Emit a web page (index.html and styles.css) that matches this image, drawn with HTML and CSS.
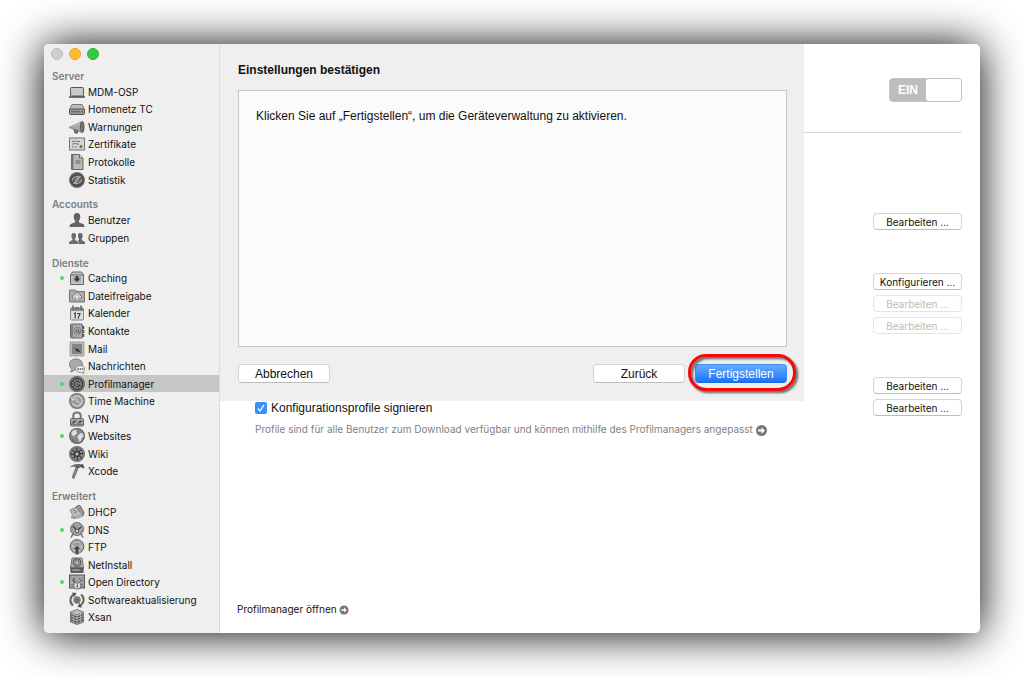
FILE: index.html
```html
<!DOCTYPE html>
<html lang="de">
<head>
    <meta charset="UTF-8"/>
    <meta name="viewport" content="width=device-width,initial-scale=1.0"/>
    <title>Server – Profilmanager</title>
    <link rel="stylesheet" href="styles.css">
</head>
<body>
<div class="window">
    <nav class="sidebar">
        <div class="titlebar">
            <button class="light" aria-label="Schließen"></button>
            <button class="light yellow" aria-label="Minimieren"></button>
            <button class="light green" aria-label="Vergrößern"></button>
        </div>

        <h2>Server</h2>
        <a href="#"><svg viewBox="0 0 16 16"><rect x="1.5" y="3.5" width="13" height="8.5" rx="1" fill="#c9c9c9" stroke="#555"/><path d="M0 13h16" stroke="#444" stroke-width="1.5"/></svg>MDM-OSP</a>
        <a href="#"><svg viewBox="0 0 16 16"><path d="M3 3.5h10l2.5 5H.5z" fill="#bbb" stroke="#777"/><rect x=".5" y="8" width="15" height="5.5" rx="1" fill="#999" stroke="#555"/><path d="M2 10.8h9M12 10.8h2" stroke="#555"/></svg>Homenetz TC</a>
        <a href="#"><svg viewBox="0 0 16 16"><path d="M0 8.5l13-6v11z" fill="#a5a5a5" stroke="#777" stroke-width=".7"/><path d="M5 10l1 4h2.5l-.5-3" fill="#777" stroke="#555"/><ellipse cx="13.3" cy="8" rx="1.7" ry="5.5" fill="#777" stroke="#555"/><path d="M4 7.5L11 4.500" stroke="#ccc"/></svg>Warnungen</a>
        <a href="#"><svg viewBox="0 0 16 16"><rect x=".5" y="2" width="15" height="12" fill="#d5d5d5" stroke="#777"/><path d="M3 5.500h3l1-1 1 1h3M3 8h2l1-1 1 1h3M3 11h2M6 11h2" stroke="#777" fill="none"/><circle cx="12" cy="10.5" r="1.5" fill="#666"/></svg>Zertifikate</a>
        <a href="#"><svg viewBox="0 0 16 16"><path d="M2.5.5h8L14 4v11.500H2.500z" fill="#b9b9b9" stroke="#666"/><path d="M2.500 1h2v14h-2z" fill="#777"/><path d="M10.500.5V4H14M6.500 7h5M6.500 9h5" fill="#ddd" stroke="#666"/></svg>Protokolle</a>
        <a href="#"><svg viewBox="0 0 16 16"><circle cx="8" cy="8" r="7.4" fill="#555" stroke="#777" stroke-width="1.2"/><path d="M3 9c1-5 6-5 9-4-4 0-5 2-6 5M13 7c-1 5-6 5-9 4 4 0 5-2 6-5" fill="none" stroke="#aaa" stroke-width="1.2"/><circle cx="8" cy="8" r="6" fill="none" stroke="#333" stroke-width=".6"/></svg>Statistik</a>

        <h2>Accounts</h2>
        <a href="#"><svg viewBox="0 0 16 16"><path d="M8 1c2.500 0 3.500 1.700 3.300 4-.1 2-.9 3.200-1.500 4 .1 1.500.6 1.800 3.200 2.600 1.800.6 2.300 1.200 2.500 3.400H.5c.2-2.200.7-2.800 2.500-3.400C5.600 10.800 6.100 10.500 6.200 9 5.600 8.200 4.800 7 4.700 5 4.500 2.700 5.500 1 8 1z" fill="#636363"/></svg>Benutzer</a>
        <a href="#"><svg viewBox="0 0 16 16"><path d="M4.700 3C6.500 3 7.200 4.300 7 6c-.1 1.500-.6 2.400-1 3 0 1.200.3 1.400 2 2 1.200.5 1.500 1 1.500 3H0c0-2 .3-2.500 1.500-3 1.700-.6 2-.8 2-2-.5-.6-1-1.500-1.100-3C2.200 4.300 3 3 4.700 3z" fill="#6d6d6d"/><path d="M11.300 3c1.800 0 2.500 1.300 2.300 3-.1 1.500-.6 2.400-1 3 0 1.200.3 1.400 1.900 2 1.200.5 1.500 1 1.500 3h-6c0-2-.3-2.700-1.300-3.300 1.300-.5 1.400-.8 1.300-1.700-.5-.6-.9-1.500-1-3-.2-1.700.6-3 2.300-3z" fill="#666"/></svg>Gruppen</a>

        <h2>Dienste</h2>
        <a href="#" class="running"><svg viewBox="0 0 16 16"><path d="M3.500 2h9l2 2.500v10h-13v-10z" fill="#c4c4c4" stroke="#666"/><path d="M2 5h12" stroke="#666"/><path d="M4 5.500h8V12H4z" fill="#aaa"/><path d="M6.800 6h2.400v2.500h2L8 12 4.800 8.500h2z" fill="#333"/></svg>Caching</a>
        <a href="#"><svg viewBox="0 0 16 16"><path d="M.5 2h6l1 1.500h8V14H.5z" fill="#aaa" stroke="#777"/><path d="M8 4l5 4.800-5 4.700-5-4.700z" fill="#ddd" stroke="#777"/><path d="M8 6.500l2.300 2.300L8 11.200 5.700 8.800z" fill="#eee" stroke="#999"/></svg>Dateifreigabe</a>
        <a href="#"><svg viewBox="0 0 16 16"><rect x="1.5" y="3" width="13" height="12" rx="1" fill="#ddd" stroke="#888"/><path d="M2 3h12v3H2z" fill="#888"/><path d="M4 .5v4M12 .5v4M6 3h4" stroke="#666" stroke-width="1.5"/><path d="M5 9l1.200-1v5.500M8 8.500h3l-2 5" stroke="#444" fill="none" stroke-width="1.2"/></svg>Kalender</a>
        <a href="#"><svg viewBox="0 0 16 16"><rect x="1.5" y="1" width="12" height="14" rx="1" fill="#aaa" stroke="#666"/><path d="M3 1.500v13" stroke="#777" stroke-width="1.5"/><circle cx="8.300" cy="8" r="3.5" fill="#bbb" stroke="#777"/><path d="M9.700 6.500v3h1.500" stroke="#666" fill="none"/><circle cx="8.200" cy="8" r="1.4" fill="none" stroke="#555"/><path d="M14.500 3v3M14.500 7v3M14.500 11v3" stroke="#555" stroke-width="1.5"/></svg>Kontakte</a>
        <a href="#"><svg viewBox="0 0 16 16"><rect x="1" y="1" width="14" height="14" fill="#bbb" stroke="#888" stroke-dasharray="1.5 .7"/><rect x="3" y="3" width="10" height="10" fill="#858585"/><path d="M5 4l1.500 3.500L9 8l3 3.500-5-1.500z" fill="#333"/></svg>Mail</a>
        <a href="#"><svg viewBox="0 0 16 16"><path d="M7 1c4 0 6.500 2.400 6.500 5.500S11 12 7 12l-1.500-.2c-1 1.500-2.300 2-4 2 .8-.8 1.300-1.700 1.200-3C1.200 9.700.5 8.200.5 6.500.5 3.400 3 1 7 1z" fill="#aaa" stroke="#777"/><path d="M11.200 7.500c2.800 0 4.500 1.500 4.500 3.500 0 1-.5 2-1.300 2.600l.7 1.900-2.400-1h-1.500c-2.800 0-4.500-1.500-4.500-3.500s1.700-3.500 4.500-3.500z" fill="#eee" stroke="#777" stroke-width=".8"/><path d="M8.500 11H10M10.800 11h1.400M13 11h1.300" stroke="#555" stroke-width="1.3"/></svg>Nachrichten</a>
        <a href="#" class="running selected"><svg viewBox="0 0 16 16"><circle cx="8" cy="8" r="7.4" fill="#777" stroke="#666" stroke-width="1.2"/><circle cx="8" cy="8" r="5.6" fill="#444" stroke="#333"/><circle cx="8" cy="8" r="4.3" fill="none" stroke="#999" stroke-width="1.2" stroke-dasharray="2 .7"/><path d="M8 8l3.500-1M8 8L6 4.500M8 8l-2 3.500" stroke="#888"/><circle cx="8" cy="8" r="1.5" fill="#333" stroke="#999"/></svg>Profilmanager</a>
        <a href="#"><svg viewBox="0 0 16 16"><circle cx="8" cy="8" r="7.4" fill="#999" stroke="#777" stroke-width="1.2"/><path d="M4 5a5 5 0 1 1-.5 5M2.500 4l1 3 3-1" fill="none" stroke="#d0d0d0" stroke-width="1.4"/><path d="M8 5v3.500l2.500 1" fill="none" stroke="#ddd"/></svg>Time Machine</a>
        <a href="#"><svg viewBox="0 0 16 16"><path d="M4.300 8V4.500C4.300.5 11.700.5 11.700 4.500V8" fill="none" stroke="#777" stroke-width="2"/><rect x="1.5" y="7.5" width="13" height="7.5" rx="1" fill="#aaa" stroke="#666"/><path d="M2 12.500l3-3h3l-3 3zM8 12.500l3-3h3l-3 3z" fill="#555"/><path d="M2 13.500h12" stroke="#777"/></svg>VPN</a>
        <a href="#" class="running"><svg viewBox="0 0 16 16"><circle cx="8" cy="8" r="7.4" fill="#858585" stroke="#666" stroke-width="1.2"/><path d="M3 3.500c2-2 4-2 5-1.500L7 4l1.500 1-2 2L5 7l1 2-2-1-2-2.500zM9.500 7l2-2 2.500.5.5 3-2 2-.5 2.500-2 .5-.5-3-1.500-1z" fill="#ddd"/><path d="M3 10l3 4-3-1z" fill="#666"/></svg>Websites</a>
        <a href="#"><svg viewBox="0 0 16 16"><circle cx="8" cy="8" r="7.4" fill="#777" stroke="#777" stroke-width="1.2"/><path d="M8 2v12M2 8h12M3.800 3.800l8.400 8.400M12.200 3.800l-8.400 8.400" stroke="#3a3a3a" stroke-width="1.8"/><circle cx="8" cy="8" r="4.5" fill="none" stroke="#aaa" stroke-width="1.3" stroke-dasharray="1.500 2"/><circle cx="8" cy="8" r="1.5" fill="#ccc"/></svg>Wiki</a>
        <a href="#"><svg viewBox="0 0 16 16"><path d="M9.500 4.500L5 15.500l-2-1L7 4z" fill="#888" stroke="#555" stroke-width=".6"/><path d="M1 4.500C4 1 8 .5 12 1.500l2-.5 1.500 4-1.500.5-2-1.500-3 1-2-1C5 3 3 3.500 1 4.500z" fill="#555"/><path d="M4 3c2-1 4-1.200 7-.5" stroke="#aaa" stroke-width=".6" fill="none"/></svg>Xcode</a>

        <h2>Erweitert</h2>
        <a href="#"><svg viewBox="0 0 16 16"><path d="M1 6l9-4 5 8-10 4z" fill="#bbb" stroke="#777" stroke-width=".8"/><path d="M7 4l1-2 3-.5 4 7-1.500 3" fill="#999" stroke="#666"/><path d="M4 7l2-1M5 9l3-1.500M9 5l2 3" stroke="#777"/><path d="M2 12c3 3 8 3 13-1M2 14h4" fill="none" stroke="#888"/></svg>DHCP</a>
        <a href="#" class="running"><svg viewBox="0 0 16 16"><path d="M4 12l-2 3.500M12 12l2 3.500" stroke="#666" stroke-width="1.5"/><circle cx="8" cy="7" r="6.4" fill="#999" stroke="#666"/><path d="M2 7h12M8 1C4 5 4 9 8 13M8 1c4 4 4 8 0 12" fill="none" stroke="#bbb" stroke-width=".8"/><path d="M4 4l4 5 4-4" fill="none" stroke="#444" stroke-width="1.5"/><circle cx="8" cy="9" r="1.8" fill="#ddd" stroke="#555"/></svg>DNS</a>
        <a href="#"><svg viewBox="0 0 16 16"><circle cx="8" cy="7.5" r="6.9" fill="#aaa" stroke="#666"/><circle cx="8" cy="7.5" r="4.5" fill="none" stroke="#ccc"/><path d="M3 5h10M3 10h10M8 1v6" stroke="#888" stroke-width=".8"/><path d="M8 6l4 4.500H9.800v5H6.200v-5H4z" fill="#444" stroke="#ccc" stroke-width=".6"/></svg>FTP</a>
        <a href="#"><svg viewBox="0 0 16 16"><path d="M3 1h10l1.500 10h-13z" fill="#b0b0b0" stroke="#777"/><rect x="2" y="11" width="12" height="4.300" fill="#666" stroke="#444"/><circle cx="8" cy="5.5" r="4" fill="#999" stroke="#555"/><circle cx="8" cy="5.5" r="1.8" fill="#ddd" stroke="#666"/><path d="M3.500 13h7" stroke="#bbb"/></svg>NetInstall</a>
        <a href="#" class="running"><svg viewBox="0 0 16 16"><rect x=".5" y="1" width="15" height="13" fill="#a5a5a5" stroke="#555"/><path d="M2 4c2-2 3 2 5-1s3 3 7 0M3 7l2-3 1 6M10 4l2 3 2-2M2 11h3M4.500 6v6M13 7v6" fill="none" stroke="#666"/><path d="M2.500 3h11M2 9h3M11 9h3" stroke="#ccc" stroke-width=".8"/><circle cx="8.300" cy="11.5" r="3.7" fill="#ddd" stroke="#666"/><path d="M8.300 9v1.200M8.300 10.800v2.700" stroke="#444" stroke-width="1.2"/></svg>Open Directory</a>
        <a href="#"><svg viewBox="0 0 16 16"><path d="M5 2.500a6.500 6.500 0 0 0-1 11M11 13.500a6.500 6.500 0 0 0 1-11" fill="none" stroke="#666" stroke-width="2"/><path d="M3 .5l4.500.5-2 4zM13 15.500L8.500 15l2-4z" fill="#555"/><circle cx="8" cy="8" r="3" fill="#aaa" stroke="#777" stroke-width="1.4"/><circle cx="8" cy="8" r="1.3" fill="none" stroke="#444"/></svg>Softwareaktualisierung</a>
        <a href="#"><svg viewBox="0 0 16 16"><path d="M8 .5L14.500 3v10L8 15.500 1.500 13V3z" fill="#888" stroke="#666" stroke-width=".8"/><path d="M8 1l6 2.300-6 2.200-6-2.200z" fill="#bbb"/><path d="M1.500 5.500L8 8l6.500-2.500M1.500 8L8 10.500 14.500 8M1.500 10.500L8 13l6.500-2.500" fill="none" stroke="#444"/><path d="M1.500 4.500L8 7l6.500-2.500M1.500 7L8 9.500 14.500 7M1.500 9.500L8 12l6.500-2.500M8 5v10M4.500 4v10M11.500 4v10" fill="none" stroke="#bbb" stroke-width=".6"/></svg>Xsan</a>
    </nav>

    <main class="content">
        <header class="service-header">
            <label class="switch"><span>EIN</span><input type="checkbox" role="switch" checked></label>
        </header>

        <section class="settings">
            <div class="row"><button class="small">Bearbeiten …</button></div>
        </section>
        <section class="settings">
            <div class="row"><button class="small">Konfigurieren …</button></div>
            <div class="row"><button class="small" disabled>Bearbeiten …</button></div>
            <div class="row"><button class="small" disabled>Bearbeiten …</button></div>
        </section>
        <section class="settings">
            <div class="row"><button class="small">Bearbeiten …</button></div>
            <div class="row">
                <label class="check"><input type="checkbox" checked>Konfigurationsprofile signieren</label>
                <button class="small">Bearbeiten …</button>
            </div>
            <p class="hint">Profile sind für alle Benutzer zum Download verfügbar und können mithilfe des Profilmanagers angepasst
                <a href="#" aria-label="Profilmanager"><svg class="arrow" viewBox="0 0 11 11"><circle cx="5.5" cy="5.5" r="5.5" fill="#777"/><path d="M2 4.500h3.500V2.300L9 5.500 5.500 8.700V6.500H2z" fill="#fff"/></svg></a>
            </p>
        </section>

        <a class="open-link" href="#">Profilmanager öffnen
            <svg class="arrow" viewBox="0 0 11 11"><circle cx="5.5" cy="5.5" r="5" fill="#777"/><path d="M2.500 4.700h3V2.800l3 2.700-3 2.700V6.300h-3z" fill="#fff"/></svg>
        </a>

        <div class="sheet" role="dialog" aria-labelledby="sheetTitle">
            <h1 id="sheetTitle">Einstellungen bestätigen</h1>
            <div class="sheet-box">
                <p>Klicken Sie auf „Fertigstellen“, um die Geräteverwaltung zu aktivieren.</p>
            </div>
            <div class="sheet-buttons">
                <button class="cancel">Abbrechen</button>
                <button>Zurück</button>
                <button class="primary">Fertigstellen</button>
            </div>
        </div>
    </main>
</div>
</body>
</html>
```
FILE: styles.css
```css
* {
    margin: 0;
    padding: 0;
    box-sizing: border-box
}

body {
    font-family: "Liberation Sans", Arial, sans-serif;
    font-size: 12px;
    color: #111;
    background: #fff;
    min-height: 100vh;
    padding: 44px;
    display: flex
}

a {
    color: inherit;
    text-decoration: none
}

button {
    font: inherit;
    color: #111;
    background: #fff;
    border: 1px solid #d4d4d4;
    border-bottom-color: #bdbdbd;
    border-radius: 4px
}

.window {
    flex: 1;
    display: flex;
    border-radius: 5px;
    background: #fff;
    box-shadow: 0 1px 44px #000
}

/* sidebar */

.sidebar {
    width: 176px;
    flex: none;
    display: flex;
    flex-direction: column;
    padding-bottom: 7px;
    background: #efefef;
    border-right: 1px solid #dcdcdc;
    border-radius: 5px 0 0 5px;
    font-family: Inter, sans-serif;
    font-size: 10px
}

.titlebar {
    height: 25px;
    padding: 4px 7px;
    display: flex;
    gap: 6px
}

.light {
    width: 12px;
    height: 12px;
    border: 1px solid #bfbfbf;
    border-radius: 50%;
    background: #cecece
}

.yellow {
    background: #fdbc2e;
    border-color: #e9a820
}

.green {
    background: #34ca42;
    border-color: #2bb437
}

.sidebar h2 {
    font-size: 10px;
    line-height: 14px;
    font-weight: 600;
    color: #7d7d7d;
    padding-left: 8px
}

.sidebar a + h2 {
    margin-top: 9px
}

.sidebar a {
    flex: 1 0 17px;
    display: flex;
    align-items: center;
    padding-left: 16px;
    line-height: 12px
}

.sidebar a::before {
    content: "";
    width: 4px;
    height: 4px;
    margin-right: 5px;
    border-radius: 50%
}

.sidebar .running::before {
    background: #4cdb62
}

.sidebar svg {
    width: 16px;
    height: 16px;
    margin-right: 3px
}

.sidebar .selected {
    background: #c6c6c6
}

/* content */

.content {
    flex: 1;
    position: relative;
    display: flex;
    flex-direction: column;
    padding: 0 18px 17px 17px
}

.service-header {
    display: flex;
    justify-content: flex-end;
    padding: 34px 0 30px;
    margin-bottom: 80px;
    border-bottom: 1px solid #d8d8d8
}

.switch {
    width: 73px;
    height: 24px;
    display: flex;
    align-items: center;
    border: 1px solid #c4c4c4;
    border-radius: 4px;
    background: #bdbdbd;
    color: #fff;
    font-weight: bold
}

.switch span {
    flex: 1;
    text-align: center
}

.switch input {
    appearance: none;
    width: 35px;
    height: 22px;
    border-radius: 3px;
    background: #fff
}

.settings {
    display: flex;
    flex-direction: column;
    gap: 5px;
    margin-bottom: 43px
}

.row {
    display: flex;
    align-items: center
}

.small {
    width: 89px;
    height: 17px;
    margin-left: auto;
    font-family: Inter, sans-serif;
    font-size: 10px;
    line-height: 14px
}

.small:disabled {
    color: #bbb;
    border-color: #e4e4e4
}

.check {
    display: flex;
    align-items: center;
    gap: 4px;
    padding-left: 18px
}

.check input {
    appearance: none;
    width: 12px;
    height: 12px;
    border-radius: 2px;
    background: #3b8ffc url("data:image/svg+xml,%3Csvg xmlns='http://www.w3.org/2000/svg' viewBox='0 0 12 12'%3E%3Cpath d='M3 6.5l2 2.5 4-6' fill='none' stroke='white' stroke-width='1.3'/%3E%3C/svg%3E")
}

.hint {
    padding-left: 18px;
    font-family: Inter, sans-serif;
    font-size: 10px;
    line-height: 16px;
    color: #7f7f7f
}

.arrow {
    width: 11px;
    height: 11px;
    vertical-align: middle
}

.open-link {
    margin-top: auto;
    align-self: flex-start;
    font-family: Inter, sans-serif;
    font-size: 10px;
    line-height: 14px
}

.open-link .arrow {
    width: 10px;
    height: 10px
}

.sheet {
    position: absolute;
    top: 0;
    left: 0;
    right: 176px;
    padding: 18px 17px 18px 18px;
    background: #efefef
}

.sheet h1 {
    font-size: 12px;
    line-height: 16px;
    margin-bottom: 12px
}

.sheet-box {
    min-height: 257px;
    padding: 17px;
    background: #fbfbfb;
    border: 1px solid #c6c6c6
}

.sheet-box p {
    line-height: 16px
}

.sheet-buttons {
    display: flex;
    gap: 10px;
    margin-top: 17px
}

.sheet-buttons button {
    width: 92px;
    height: 19px
}

.sheet-buttons .cancel {
    margin-right: auto
}

.sheet-buttons .primary {
    position: relative;
    color: #fff;
    background: linear-gradient(#66aefb, #1a72fb);
    border-color: #3f8ffa #3f8ffa #1c6ae0
}

/* red marker around the button */
.primary::after {
    content: "";
    position: absolute;
    inset: -11px -10px -9px -8px;
    border: 3px solid #f80808;
    border-radius: 18px;
    filter: drop-shadow(2px 2px 1px rgba(0, 0, 0, .6))
}
```
